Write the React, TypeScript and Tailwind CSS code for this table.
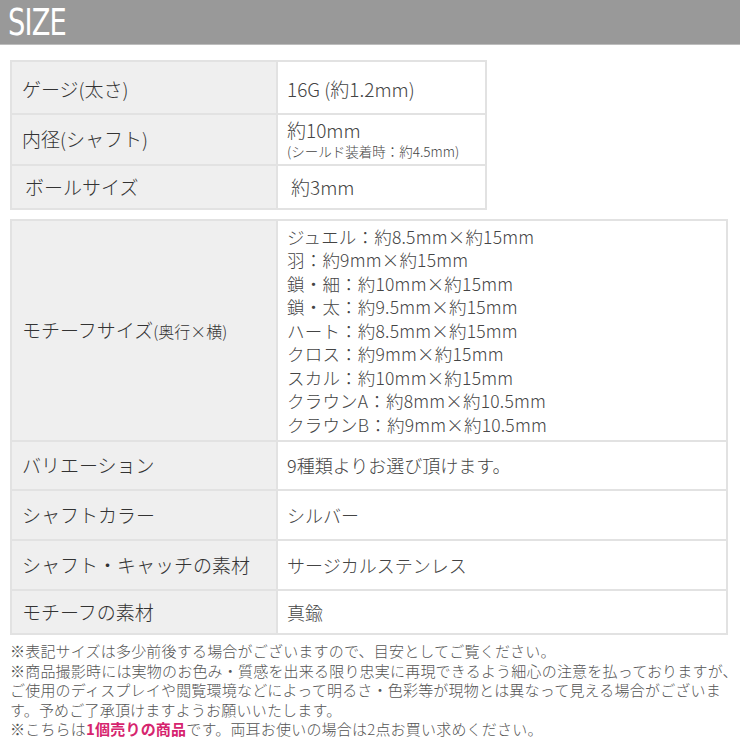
import React from "react";

const jp = { fontFamily: '"Noto Sans CJK JP", "Noto Sans", sans-serif' };

const motifs = [
  "ジュエル：約8.5mm×約15mm",
  "羽：約9mm×約15mm",
  "鎖・細：約10mm×約15mm",
  "鎖・太：約9.5mm×約15mm",
  "ハート：約8.5mm×約15mm",
  "クロス：約9mm×約15mm",
  "スカル：約10mm×約15mm",
  "クラウンA：約8mm×約10.5mm",
  "クラウンB：約9mm×約10.5mm",
];

function Label({ children, className = "" }: { children: React.ReactNode; className?: string }) {
  return (
    <div className={`bg-[#efefef] flex items-center pl-[10px] text-[19px] text-[#333] ${className}`}>
      {children}
    </div>
  );
}

function Value({ children, className = "" }: { children: React.ReactNode; className?: string }) {
  return (
    <div className={`bg-white flex items-center pl-[9px] text-[18px] text-[#444] ${className}`}>
      {children}
    </div>
  );
}

export default function App() {
  return (
    <div className="w-[740px] h-[740px] bg-white overflow-hidden font-light" style={jp}>
      <div className="h-[45px] bg-[#999999] border-b border-[#bdbdbd] flex items-center pl-[8px]">
        <span
          className="text-white text-[37px] leading-none tracking-[-1px] font-normal"
          style={{ fontFamily: '"DejaVu Sans Condensed", "Open Sans", sans-serif', transform: "scaleX(0.82)", transformOrigin: "left" }}
        >
          SIZE
        </span>
      </div>

      <div className="ml-[10px] mt-[15px] w-[477px] grid grid-cols-[264px_207px] grid-rows-[51px_49px_42px] gap-[2px] p-[2px] bg-[#e2e2e2]">
        <Label className="pt-[4px]">ゲージ(太さ)</Label>
        <Value className="text-[19px] pt-[4px]">16G (約1.2mm)</Value>
        <Label>内径(シャフト)</Label>
        <Value className="flex-col !items-start justify-center">
          <span className="text-[19px] leading-[22px]">約10mm</span>
          <span className="text-[13.5px] leading-[20px]">(シールド装着時：約4.5mm)</span>
        </Value>
        <Label className="pl-[13px]">ボールサイズ</Label>
        <Value className="pl-[13px] text-[19px]">約3mm</Value>
      </div>

      <div className="ml-[10px] mt-[9px] w-[718px] grid grid-cols-[264px_448px] grid-rows-[219px_47px_48px_48px_42px] gap-[2px] p-[2px] bg-[#e2e2e2]">
        <Label>
          モチーフサイズ<span className="text-[16px]">(奥行×横)</span>
        </Label>
        <Value className="flex-col !items-start justify-center">
          {motifs.map((m) => (
            <span key={m} className="leading-[23.5px] text-[17.5px] tracking-[0.2px]">
              {m}
            </span>
          ))}
        </Value>
        <Label>バリエーション</Label>
        <Value>9種類よりお選び頂けます。</Value>
        <Label>シャフトカラー</Label>
        <Value>シルバー</Value>
        <Label>シャフト・キャッチの素材</Label>
        <Value>サージカルステンレス</Value>
        <Label>モチーフの素材</Label>
        <Value>真鍮</Value>
      </div>

      <div className="ml-[10px] mt-[6px] text-[15px] leading-[19.5px] text-[#555] whitespace-nowrap tracking-[0.2px]">
        <div>※表記サイズは多少前後する場合がございますので、目安としてご覧ください。</div>
        <div>※商品撮影時には実物のお色み・質感を出来る限り忠実に再現できるよう細心の注意を払っておりますが、</div>
        <div>ご使用のディスプレイや閲覧環境などによって明るさ・色彩等が現物とは異なって見える場合がございま</div>
        <div>す。予めご了承頂けますようお願いいたします。</div>
        <div>
          ※こちらは<span className="text-[#d6246e] font-bold">1個売りの商品</span>です。両耳お使いの場合は2点お買い求めください。
        </div>
      </div>
    </div>
  );
}
